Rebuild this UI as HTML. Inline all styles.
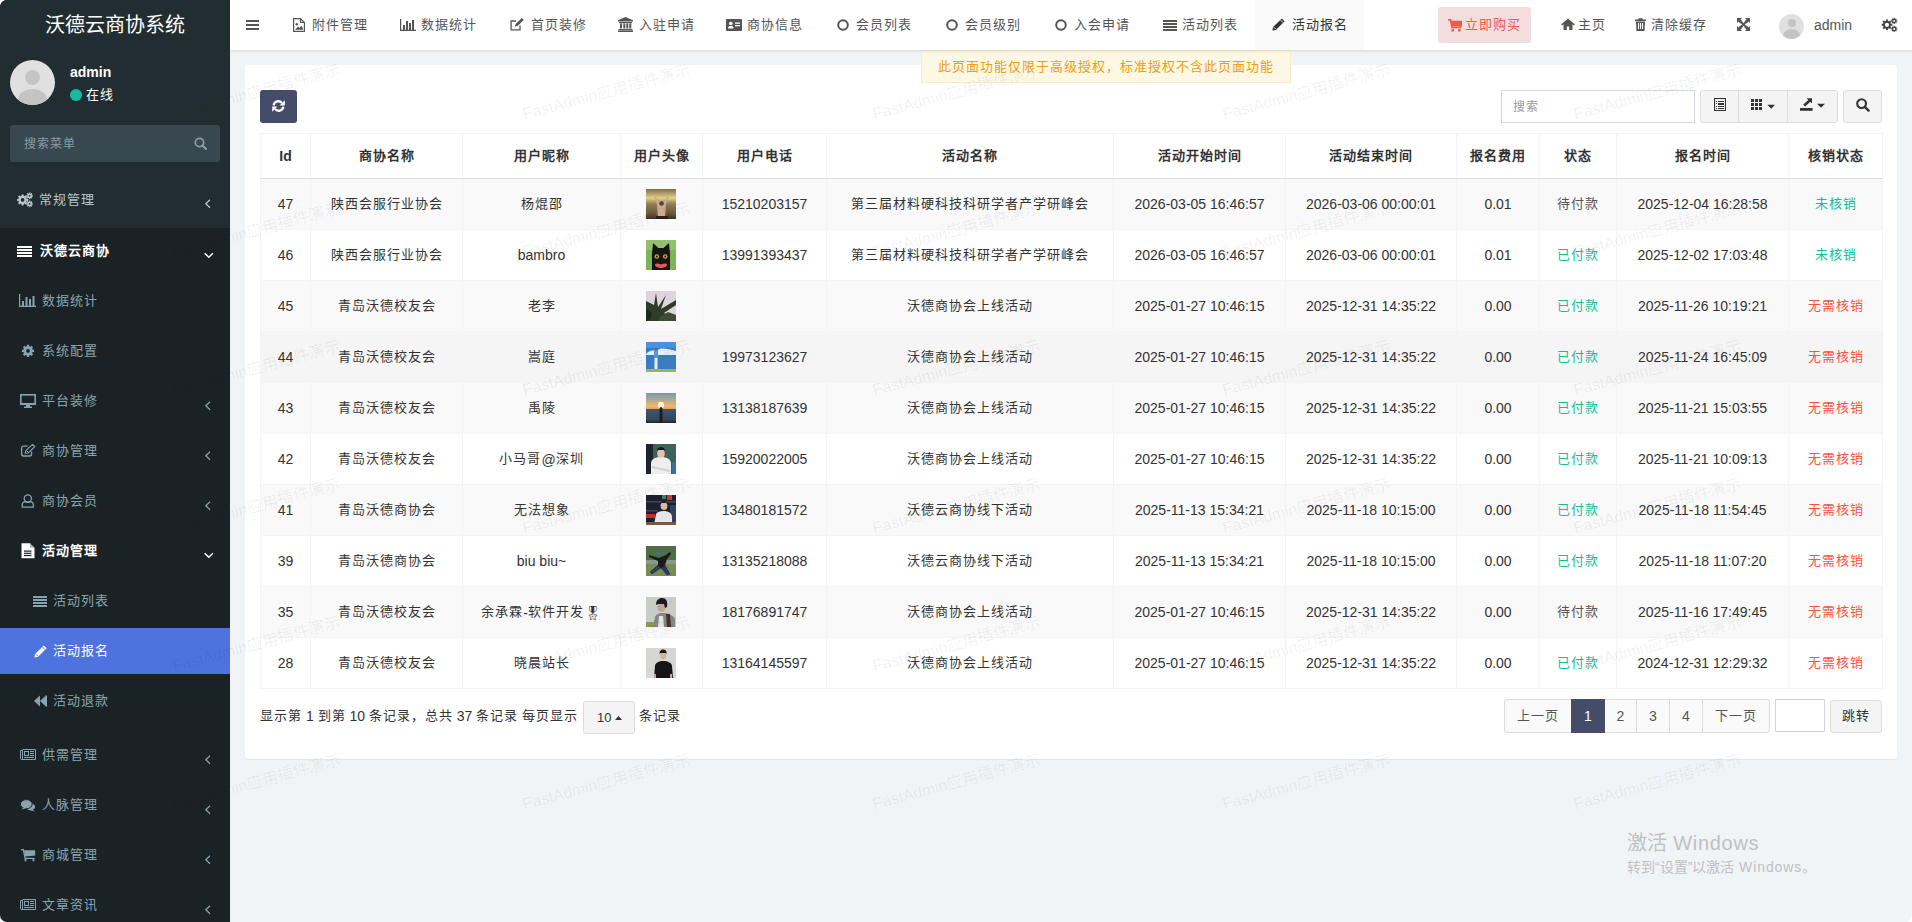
<!DOCTYPE html>
<html lang="zh-CN"><head><meta charset="utf-8"><title>活动报名</title>
<style>
*{box-sizing:border-box}
html,body{margin:0;padding:0;width:1912px;height:922px;overflow:hidden;background:#fff;font-family:"Liberation Sans",sans-serif;font-size:14px;color:#333}
#win{position:absolute;left:0;top:0;width:1912px;height:922px;border-radius:7px;overflow:hidden;background:#f1f4f6}
.abs{position:absolute}
svg{display:block;position:absolute}
.c{font-size:13px;letter-spacing:1px;position:relative;top:-1px}
.tb .c{top:-2px}
.s13 .c{font-size:12px}
.logo .c,.wm .c,.win .c{font-size:inherit;letter-spacing:0;top:0}
/* sidebar */
#side{position:absolute;left:0;top:0;width:230px;height:922px;background:#1a2226}
#side .top{position:absolute;left:0;top:0;width:230px;height:228px;background:#222d32}
.logo{position:absolute;left:0;top:0;width:230px;height:50px;line-height:50px;text-align:center;color:#fff;font-size:20px}
.uav{position:absolute;left:10px;top:60px;width:45px;height:45px;border-radius:50%;background:#e0e0e0;overflow:hidden}
.uav:before{content:"";position:absolute;left:15px;top:10px;width:15px;height:15px;border-radius:50%;background:#c4c4c4}
.uav:after{content:"";position:absolute;left:8px;top:29px;width:29px;height:20px;border-radius:50%;background:#c4c4c4}
.uname{position:absolute;left:70px;top:64px;color:#fff;font-weight:bold;font-size:14px}
.uon{position:absolute;left:86px;top:85px;color:#fff;font-size:14px}
.dot{position:absolute;left:70px;top:89px;width:12px;height:12px;border-radius:50%;background:#18bc9c}
.sbox{position:absolute;left:10px;top:125px;width:210px;height:37px;border-radius:3px;background:#374850}
.sbox > span{position:absolute;left:14px;top:10px;color:#8a9ba3;font-size:13px}
.mi{position:absolute;left:0;width:230px;height:20px;font-size:14px;color:#8aa4af;line-height:20px}
.mi .t{position:absolute;left:42px;top:0}
.mi.sub .t{left:53px}
.mi.open{color:#fff;font-weight:bold}
.mi.gen{color:#b8c7ce}
.mi svg{fill:currentColor}
.ang{position:absolute;left:204px;width:8px;height:10px}
.act{position:absolute;left:0;top:628px;width:230px;height:46px;background:#4e73df}
/* header */
#hdr{position:absolute;left:230px;top:0;width:1682px;height:50px;background:#fff;z-index:5}
#hdr .sh{position:absolute;left:0;top:50px;width:1682px;height:4px;background:linear-gradient(rgba(0,10,20,.09),rgba(0,10,20,.02) 60%,rgba(0,0,0,0))}
.nv{position:absolute;top:15px;height:20px;line-height:20px;color:#555;font-size:14px}
.nv svg{fill:#555}
.navact{position:absolute;left:1025px;top:0;width:109px;height:50px;background:#fafafa}
.buy{position:absolute;left:1208px;top:7px;width:93px;height:36px;background:#f2dede;border-radius:3px}
/* content */
.alert{position:absolute;left:921px;top:50px;width:370px;height:33px;background:#fcf8e3;border:1px solid #faebcc;color:#f39c12;font-size:14px;line-height:32px;text-align:center}
.panel{position:absolute;left:245px;top:65px;width:1652px;height:694px;background:#fff;border-radius:3px;box-shadow:0 1px 1px rgba(0,0,0,.06)}
.btn{position:absolute;border:1px solid #ddd;background:#f4f4f4;border-radius:3px}
.tb{position:absolute;left:260px;top:133px;border-collapse:collapse;table-layout:fixed;width:1622px}
.tb th,.tb td{border:1px solid #f4f4f4;text-align:center;padding:0;font-size:14px;white-space:nowrap;overflow:hidden}
.tb th{height:45px;font-weight:bold;color:#333;border-bottom:1px solid #ddd;background:#fff}
.tb td{height:51px;color:#333}
.tb tr.odd td{background:#f9f9f9}
.tb tr.even td{background:#fff}
.tb tr.hover td{background:#f5f5f5}
.tb svg.av{display:inline-block;position:relative;left:-1px;width:30px;height:30px;vertical-align:middle}
.ok{color:#18bc9c}
.wait{color:#555}
.red{color:#f75444}
.pg{position:absolute;top:699px;height:34px;border:1px solid #ddd;background:#fafafa;color:#555;line-height:32px;text-align:center;font-size:14px}
.wm{position:absolute;color:rgba(40,0,0,.065);font-size:16px;white-space:nowrap;transform:rotate(-15deg);transform-origin:0 0;line-height:16px;pointer-events:none}
</style></head>
<body><div id="win">

<!-- SIDEBAR -->
<div id="side">
 <div class="top"></div>
 <div class="logo"><span class="c">沃德云商协系统</span></div>
 <div class="uav"></div>
 <div class="uname">admin</div>
 <div class="dot"></div>
 <div class="uon"><span class="c">在线</span></div>
 <div class="sbox"><span class="s13"><span class="c">搜索菜单</span></span>
  <svg style="left:184px;top:12px" width="13" height="13" viewBox="0 0 13 13"><circle cx="5.5" cy="5.5" r="4.2" fill="none" stroke="#8a9ba3" stroke-width="1.8"/><path d="M8.5 8.5L12 12" stroke="#8a9ba3" stroke-width="2.2" stroke-linecap="round"/></svg>
 </div>
 <div class="act"></div>

 <div class="mi gen" style="top:190px"><svg style="left:14px;top:-2px" width="24" height="24" viewBox="0 0 24 24"><path fill-rule="evenodd" fill="currentColor" d="M7.56 7.83L7.60 6.39L9.60 6.39L9.64 7.83L10.74 8.28L11.79 7.30L13.20 8.71L12.22 9.76L12.67 10.86L14.11 10.90L14.11 12.90L12.67 12.94L12.22 14.04L13.20 15.09L11.79 16.50L10.74 15.52L9.64 15.97L9.60 17.41L7.60 17.41L7.56 15.97L6.46 15.52L5.41 16.50L4.00 15.09L4.98 14.04L4.53 12.94L3.09 12.90L3.09 10.90L4.53 10.86L4.98 9.76L4.00 8.71L5.41 7.30L6.46 8.28ZM10.50 11.90A1.9 1.9 0 1 0 6.70 11.90A1.9 1.9 0 1 0 10.50 11.90ZM14.98 5.38L14.99 4.45L16.21 4.45L16.22 5.38L16.87 5.65L17.54 5.00L18.40 5.86L17.75 6.53L18.02 7.18L18.95 7.19L18.95 8.41L18.02 8.42L17.75 9.07L18.40 9.74L17.54 10.60L16.87 9.95L16.22 10.22L16.21 11.15L14.99 11.15L14.98 10.22L14.33 9.95L13.66 10.60L12.80 9.74L13.45 9.07L13.18 8.42L12.25 8.41L12.25 7.19L13.18 7.18L13.45 6.53L12.80 5.86L13.66 5.00L14.33 5.65ZM16.50 7.80A0.9 0.9 0 1 0 14.70 7.80A0.9 0.9 0 1 0 16.50 7.80ZM14.98 13.48L14.99 12.55L16.21 12.55L16.22 13.48L16.87 13.75L17.54 13.10L18.40 13.96L17.75 14.63L18.02 15.28L18.95 15.29L18.95 16.51L18.02 16.52L17.75 17.17L18.40 17.84L17.54 18.70L16.87 18.05L16.22 18.32L16.21 19.25L14.99 19.25L14.98 18.32L14.33 18.05L13.66 18.70L12.80 17.84L13.45 17.17L13.18 16.52L12.25 16.51L12.25 15.29L13.18 15.28L13.45 14.63L12.80 13.96L13.66 13.10L14.33 13.75ZM16.50 15.90A0.9 0.9 0 1 0 14.70 15.90A0.9 0.9 0 1 0 16.50 15.90Z"/></svg><span class="t" style="left:39px"><span class="c">常规管理</span></span><svg class="ang" style="top:9px" viewBox="0 0 8 10"><path d="M6 0.8L1.8 4.8L6 8.8" fill="none" stroke="#b8c7ce" stroke-width="1.3"/></svg></div>

 <div class="mi open" style="top:241px"><svg style="left:17px;top:5px" width="15" height="11" viewBox="0 0 15 11"><rect x="0" y="0" width="15" height="2" /><rect x="0" y="3" width="15" height="2"/><rect x="0" y="6" width="15" height="2"/><rect x="0" y="9" width="15" height="2"/></svg><span class="t" style="left:40px"><span class="c">沃德云商协</span></span><svg class="ang" style="top:10px;width:11px;height:8px" viewBox="0 0 11 8"><path d="M0.7 2.2L4.8 6.3L8.9 2.2" fill="none" stroke="#fff" stroke-width="1.5"/></svg></div>

 <div class="mi" style="top:291px"><svg style="left:19px;top:3px" width="17" height="14" viewBox="0 0 17 14"><path d="M0.6 0V12.4H17" fill="none" stroke="currentColor" stroke-width="1.2"/><rect x="3" y="7" width="2" height="5"/><rect x="6.5" y="3" width="2" height="9"/><rect x="10" y="5" width="2" height="7"/><rect x="13.5" y="2" width="2" height="10"/></svg><span class="t"><span class="c">数据统计</span></span></div>

 <div class="mi" style="top:341px"><svg style="left:16px;top:-3px" width="24" height="24" viewBox="0 0 24 24"><path fill-rule="evenodd" fill="currentColor" d="M10.81 8.25L10.89 6.80L13.11 6.80L13.19 8.25L14.44 8.77L15.53 7.80L17.10 9.37L16.13 10.46L16.65 11.71L18.10 11.79L18.10 14.01L16.65 14.09L16.13 15.34L17.10 16.43L15.53 18.00L14.44 17.03L13.19 17.55L13.11 19.00L10.89 19.00L10.81 17.55L9.56 17.03L8.47 18.00L6.90 16.43L7.87 15.34L7.35 14.09L5.90 14.01L5.90 11.79L7.35 11.71L7.87 10.46L6.90 9.37L8.47 7.80L9.56 8.77ZM13.90 12.90A1.9 1.9 0 1 0 10.10 12.90A1.9 1.9 0 1 0 13.90 12.90Z"/></svg><span class="t"><span class="c">系统配置</span></span></div>

 <div class="mi" style="top:391px"><svg style="left:20px;top:3px" width="16" height="14" viewBox="0 0 16 14"><rect x="0.8" y="0.8" width="14.4" height="9.4" fill="none" stroke="currentColor" stroke-width="1.6"/><rect x="0" y="9" width="16" height="2"/><rect x="6" y="11" width="4" height="2"/><rect x="4" y="12.5" width="8" height="1.5"/></svg><span class="t"><span class="c">平台装修</span></span><svg class="ang" style="top:10px" viewBox="0 0 8 10"><path d="M6 0.8L1.8 4.8L6 8.8" fill="none" stroke="currentColor" stroke-width="1.25"/></svg></div>

 <div class="mi" style="top:441px"><svg style="left:20px;top:3px" width="16" height="14" viewBox="0 0 16 14"><path d="M7.5 2.1H3.6Q1.6 2.1 1.6 4.1V10Q1.6 12 3.6 12H9.6Q11.6 12 11.6 10V7.5" fill="none" stroke="currentColor" stroke-width="1.3"/><path d="M5.2 9.3L5.8 6.7L12.6 0.4L14.9 2.6L8.1 9Z" fill="none" stroke="currentColor" stroke-width="1.1" stroke-linejoin="round"/><path d="M6.5 6.5L8.5 8.5" stroke="currentColor" stroke-width="1"/></svg><span class="t"><span class="c">商协管理</span></span><svg class="ang" style="top:10px" viewBox="0 0 8 10"><path d="M6 0.8L1.8 4.8L6 8.8" fill="none" stroke="currentColor" stroke-width="1.25"/></svg></div>

 <div class="mi" style="top:491px"><svg style="left:20px;top:2px" width="16" height="16" viewBox="0 0 16 16"><circle cx="7.8" cy="5.5" r="3.6" fill="none" stroke="currentColor" stroke-width="1.25"/><path d="M2.2 14.2V12.5C2.2 10 4 8.7 5.6 8.7C6.8 9.3 8.8 9.3 10 8.7C11.6 8.7 13.4 10 13.4 12.5V14.2Z" fill="none" stroke="currentColor" stroke-width="1.25" stroke-linejoin="round"/></svg><span class="t"><span class="c">商协会员</span></span><svg class="ang" style="top:10px" viewBox="0 0 8 10"><path d="M6 0.8L1.8 4.8L6 8.8" fill="none" stroke="currentColor" stroke-width="1.25"/></svg></div>

 <div class="mi open" style="top:541px"><svg style="left:21px;top:2px" width="14" height="16" viewBox="0 0 14 16"><path d="M0.5 0.3H9L13.5 4.8V15.3H0.5Z" fill="#fff"/><path d="M9 0.3V4.8H13.5Z" fill="#1a2226" opacity=".35"/><rect x="3" y="7.5" width="7.5" height="1.2" fill="#1a2226"/><rect x="3" y="9.7" width="7.5" height="1.2" fill="#1a2226"/><rect x="3" y="11.9" width="7.5" height="1.2" fill="#1a2226"/></svg><span class="t"><span class="c">活动管理</span></span><svg class="ang" style="top:10px;width:11px;height:8px" viewBox="0 0 11 8"><path d="M0.7 2.2L4.8 6.3L8.9 2.2" fill="none" stroke="#fff" stroke-width="1.5"/></svg></div>

 <div class="mi sub" style="top:591px"><svg style="left:33px;top:5px" width="14" height="11" viewBox="0 0 14 11"><rect x="0" y="0" width="14" height="2"/><rect x="0" y="3" width="14" height="2"/><rect x="0" y="6" width="14" height="2"/><rect x="0" y="9" width="14" height="2"/></svg><span class="t"><span class="c">活动列表</span></span></div>

 <div class="mi sub" style="top:641px;color:#fff"><svg style="left:34px;top:4px" width="14" height="13" viewBox="0 0 14 13"><path d="M0.4 12.6L1.1 9.1L9.8 0.5L12.6 3.3L3.9 11.9Z" fill="#fff"/><path d="M8.4 1.9L11.2 4.7" stroke="#4e73df" stroke-width="0.9"/><path d="M1.9 9.2L3.8 11.1" stroke="#4e73df" stroke-width="0.9"/><path d="M0.9 12.1L1.3 10.4L2.6 11.7Z" fill="#fff"/></svg><span class="t"><span class="c">活动报名</span></span></div>

 <div class="mi sub" style="top:691px"><svg style="left:34px;top:4px" width="13" height="12" viewBox="0 0 13 12"><path d="M0 6L6 0.5V11.5Z"/><path d="M6 6L12 0.5V11.5Z"/><rect x="11.5" y="0.5" width="1.5" height="11"/></svg><span class="t"><span class="c">活动退款</span></span></div>

 <div class="mi" style="top:745px"><svg style="left:20px;top:4px" width="17" height="12" viewBox="0 0 17 12"><path d="M2.5 0.5H15.5V10.5H1.5Q0.5 10.5 0.5 9.5V1.5H2.5V10.5" fill="none" stroke="currentColor" stroke-width="1"/><rect x="4.5" y="2.5" width="4" height="4" fill="none" stroke="currentColor" stroke-width="1"/><rect x="10" y="2" width="4" height="1"/><rect x="10" y="4" width="4" height="1"/><rect x="10" y="6" width="4" height="1"/><rect x="4" y="8" width="10" height="1"/></svg><span class="t"><span class="c">供需管理</span></span><svg class="ang" style="top:10px" viewBox="0 0 8 10"><path d="M6 0.8L1.8 4.8L6 8.8" fill="none" stroke="currentColor" stroke-width="1.25"/></svg></div>

 <div class="mi" style="top:795px"><svg style="left:20px;top:3px" width="16" height="15" viewBox="0 0 16 15"><ellipse cx="10.5" cy="8.8" rx="4.6" ry="3.6"/><path d="M12.5 11.5L15 13.6L10.5 12.3Z"/><ellipse cx="6.3" cy="6.2" rx="5.9" ry="4.6" stroke="#1a2226" stroke-width="1"/><path d="M3.2 9.8L1.6 11.6L6 10.6Z"/></svg><span class="t"><span class="c">人脉管理</span></span><svg class="ang" style="top:10px" viewBox="0 0 8 10"><path d="M6 0.8L1.8 4.8L6 8.8" fill="none" stroke="currentColor" stroke-width="1.25"/></svg></div>

 <div class="mi" style="top:845px"><svg style="left:21px;top:4px" width="15" height="13" viewBox="0 0 15 13"><path d="M0 0.6H2.3L4.2 9.3H13.5" fill="none" stroke="currentColor" stroke-width="1.3"/><path d="M3 1.2H14.2V6.4L4.2 7.5Z"/><rect x="3.6" y="9.5" width="1.8" height="2.8"/><rect x="11.6" y="9.5" width="1.8" height="2.8"/></svg><span class="t"><span class="c">商城管理</span></span><svg class="ang" style="top:10px" viewBox="0 0 8 10"><path d="M6 0.8L1.8 4.8L6 8.8" fill="none" stroke="currentColor" stroke-width="1.25"/></svg></div>

 <div class="mi" style="top:895px"><svg style="left:20px;top:4px" width="17" height="12" viewBox="0 0 17 12"><path d="M2.5 0.5H15.5V10.5H1.5Q0.5 10.5 0.5 9.5V1.5H2.5V10.5" fill="none" stroke="currentColor" stroke-width="1"/><rect x="4.5" y="2.5" width="4" height="4" fill="none" stroke="currentColor" stroke-width="1"/><rect x="10" y="2" width="4" height="1"/><rect x="10" y="4" width="4" height="1"/><rect x="10" y="6" width="4" height="1"/><rect x="4" y="8" width="10" height="1"/></svg><span class="t"><span class="c">文章资讯</span></span><svg class="ang" style="top:10px" viewBox="0 0 8 10"><path d="M6 0.8L1.8 4.8L6 8.8" fill="none" stroke="currentColor" stroke-width="1.25"/></svg></div>
</div>

<!-- HEADER -->
<div id="hdr">
 <div class="navact"></div>
 <svg style="left:16px;top:20px" width="13" height="10" viewBox="0 0 13 10"><rect y="0" width="13" height="2" fill="#555"/><rect y="4" width="13" height="2" fill="#555"/><rect y="8" width="13" height="2" fill="#555"/></svg>

 <div class="nv" style="left:62px"><svg style="left:1px;top:3px" width="12" height="14" viewBox="0 0 12 14"><path d="M0.6 0.6H7.5L11.4 4.5V13.4H0.6Z" fill="none" stroke="#555" stroke-width="1.2"/><path d="M7.5 0.6V4.5H11.4" fill="none" stroke="#555" stroke-width="1.2"/><circle cx="3.8" cy="6.3" r="1.2" fill="#555"/><path d="M2 11.8L5 8.5L6.5 10L8.3 7.8L10 10.5V11.8Z" fill="#555"/></svg><span style="position:absolute;left:20px;width:60px"><span class="c">附件管理</span></span></div>
 <div class="nv" style="left:170px"><svg style="left:0;top:4px" width="16" height="12" viewBox="0 0 16 12"><path d="M0.6 0V11.4H16" fill="none" stroke="#555" stroke-width="1.2"/><rect x="3" y="6" width="2" height="5"/><rect x="6" y="2" width="2" height="9"/><rect x="9" y="4" width="2" height="7"/><rect x="12" y="1" width="2" height="10"/></svg><span style="position:absolute;left:21px;width:60px"><span class="c">数据统计</span></span></div>
 <div class="nv" style="left:280px"><svg style="left:0;top:3px" width="14" height="13" viewBox="0 0 14 13"><path d="M10 7.5V11.9H1.1V3H6" fill="none" stroke="#555" stroke-width="1.3"/><path d="M5 8.5L5.6 6L11.8 0L13.8 2L7.5 8Z" fill="#555"/></svg><span style="position:absolute;left:21px;width:60px"><span class="c">首页装修</span></span></div>
 <div class="nv" style="left:388px"><svg style="left:0;top:2px" width="15" height="15" viewBox="0 0 15 15"><path d="M7.5 0L15 3.2V4.5H0V3.2Z"/><rect x="1" y="5" width="13" height="1.2"/><rect x="2" y="6.5" width="2" height="5"/><rect x="5.3" y="6.5" width="2" height="5"/><rect x="8.3" y="6.5" width="2" height="5"/><rect x="11.3" y="6.5" width="2" height="5"/><rect x="0.5" y="12" width="14" height="1.3"/><rect x="0" y="13.5" width="15" height="1.5"/></svg><span style="position:absolute;left:21px;width:60px"><span class="c">入驻申请</span></span></div>
 <div class="nv" style="left:496px"><svg style="left:0;top:4px" width="16" height="12" viewBox="0 0 16 12"><rect x="0" y="0" width="16" height="12" rx="1"/><circle cx="4.8" cy="4.5" r="1.8" fill="#fff"/><path d="M2 9.5C2 7.5 3 7 4.8 7C6.6 7 7.6 7.5 7.6 9.5Z" fill="#fff"/><rect x="9" y="3.5" width="5" height="1.3" fill="#fff"/><rect x="9" y="6" width="5" height="1.3" fill="#fff"/></svg><span style="position:absolute;left:21px;width:60px"><span class="c">商协信息</span></span></div>
 <div class="nv" style="left:607px"><svg style="left:0;top:4px" width="12" height="12" viewBox="0 0 12 12"><circle cx="6" cy="6" r="4.8" fill="none" stroke="#555" stroke-width="2"/></svg><span style="position:absolute;left:19px;width:60px"><span class="c">会员列表</span></span></div>
 <div class="nv" style="left:716px"><svg style="left:0;top:4px" width="12" height="12" viewBox="0 0 12 12"><circle cx="6" cy="6" r="4.8" fill="none" stroke="#555" stroke-width="2"/></svg><span style="position:absolute;left:19px;width:60px"><span class="c">会员级别</span></span></div>
 <div class="nv" style="left:825px"><svg style="left:0;top:4px" width="12" height="12" viewBox="0 0 12 12"><circle cx="6" cy="6" r="4.8" fill="none" stroke="#555" stroke-width="2"/></svg><span style="position:absolute;left:19px;width:60px"><span class="c">入会申请</span></span></div>
 <div class="nv" style="left:933px"><svg style="left:0;top:5px" width="14" height="11" viewBox="0 0 14 11"><rect y="0" width="14" height="2"/><rect y="3" width="14" height="2"/><rect y="6" width="14" height="2"/><rect y="9" width="14" height="2"/></svg><span style="position:absolute;left:19px;width:60px"><span class="c">活动列表</span></span></div>
 <div class="nv" style="left:1042px;color:#333"><svg style="left:0;top:3px" width="14" height="13" viewBox="0 0 14 13"><path d="M0.4 12.6L1.1 9.1L9.8 0.5L12.6 3.3L3.9 11.9Z" fill="#333"/><path d="M8.4 1.9L11.2 4.7" stroke="#fafafa" stroke-width="0.9"/><path d="M1.9 9.2L3.8 11.1" stroke="#fafafa" stroke-width="0.9"/><path d="M0.9 12.1L1.3 10.4L2.6 11.7Z" fill="#333"/></svg><span style="position:absolute;left:20px;width:60px"><span class="c">活动报名</span></span></div>

 <div class="buy"></div>
 <div class="nv" style="left:1218px;color:#f5574a"><svg style="left:0;top:4px" width="14" height="13" viewBox="0 0 14 13"><path d="M0 0.8H2.5L4 8.5H12.5L14 2.5H3" fill="none" stroke="#f5574a" stroke-width="1.6"/><path d="M3 2.5H14L12.8 7.5H4Z" fill="#f5574a"/><rect x="3.5" y="10" width="2.5" height="2.5" fill="#f5574a"/><rect x="10" y="10" width="2.5" height="2.5" fill="#f5574a"/></svg><span style="position:absolute;left:17px;width:60px"><span class="c">立即购买</span></span></div>
 <div class="nv" style="left:1331px"><svg style="left:0;top:3px" width="14" height="12" viewBox="0 0 14 12"><path d="M7 0.5L0 6.5L1 7.5L2.5 6.3V12H5.8V8.5H8.2V12H11.5V6.3L13 7.5L14 6.5Z"/></svg><span style="position:absolute;left:17px;width:60px"><span class="c">主页</span></span></div>
 <div class="nv" style="left:1405px"><svg style="left:0;top:3px" width="11" height="13" viewBox="0 0 11 13"><path d="M3.5 0.3H7.5L8 1.5H11V3H0V1.5H3Z" fill="#555"/><path d="M1 3.5H10L9.5 13H1.5Z" fill="#555"/><rect x="3" y="5" width="1.1" height="6" fill="#fff"/><rect x="5" y="5" width="1.1" height="6" fill="#fff"/><rect x="7" y="5" width="1.1" height="6" fill="#fff"/></svg><span style="position:absolute;left:16px;width:60px"><span class="c">清除缓存</span></span></div>
 <svg style="left:1507px;top:18px" width="13" height="13" viewBox="0 0 13 13"><path d="M0 0H5L3.5 1.5L5.5 3.5L3.5 5.5L1.5 3.5L0 5Z M13 0V5L11.5 3.5L9.5 5.5L7.5 3.5L9.5 1.5L8 0Z M0 13V8L1.5 9.5L3.5 7.5L5.5 9.5L3.5 11.5L5 13Z M13 13H8L9.5 11.5L7.5 9.5L9.5 7.5L11.5 9.5L13 8Z" fill="#555"/><path d="M3 3L10 10M10 3L3 10" stroke="#555" stroke-width="1.8"/></svg>
 <div class="abs" style="left:1549px;top:14px;width:25px;height:25px;border-radius:50%;background:#e0e0e0;overflow:hidden"><div class="abs" style="left:8.5px;top:5px;width:8px;height:8px;border-radius:50%;background:#c4c4c4"></div><div class="abs" style="left:4px;top:15px;width:17px;height:13px;border-radius:50%;background:#c4c4c4"></div></div>
 <div class="nv" style="left:1584px;color:#555">admin</div>
 <svg style="left:1644px;top:12px" width="30" height="26" viewBox="0 0 30 26"><path fill-rule="evenodd" fill="#444" d="M11.97 8.93L11.99 7.49L13.93 7.49L13.95 8.93L15.00 9.36L16.03 8.36L17.40 9.73L16.40 10.76L16.83 11.81L18.27 11.83L18.27 13.77L16.83 13.79L16.40 14.84L17.40 15.87L16.03 17.24L15.00 16.24L13.95 16.67L13.93 18.11L11.99 18.11L11.97 16.67L10.92 16.24L9.89 17.24L8.52 15.87L9.52 14.84L9.09 13.79L7.65 13.77L7.65 11.83L9.09 11.81L9.52 10.76L8.52 9.73L9.89 8.36L10.92 9.36ZM15.06 12.80A2.1 2.1 0 1 0 10.86 12.80A2.1 2.1 0 1 0 15.06 12.80ZM19.61 6.78L19.57 5.76L20.83 5.76L20.79 6.78L21.28 6.98L21.97 6.23L22.87 7.13L22.12 7.82L22.32 8.31L23.34 8.27L23.34 9.53L22.32 9.49L22.12 9.98L22.87 10.67L21.97 11.57L21.28 10.82L20.79 11.02L20.83 12.04L19.57 12.04L19.61 11.02L19.12 10.82L18.43 11.57L17.53 10.67L18.28 9.98L18.08 9.49L17.06 9.53L17.06 8.27L18.08 8.31L18.28 7.82L17.53 7.13L18.43 6.23L19.12 6.98ZM21.20 8.90A1.0 1.0 0 1 0 19.20 8.90A1.0 1.0 0 1 0 21.20 8.90ZM19.61 14.78L19.57 13.76L20.83 13.76L20.79 14.78L21.28 14.98L21.97 14.23L22.87 15.13L22.12 15.82L22.32 16.31L23.34 16.27L23.34 17.53L22.32 17.49L22.12 17.98L22.87 18.67L21.97 19.57L21.28 18.82L20.79 19.02L20.83 20.04L19.57 20.04L19.61 19.02L19.12 18.82L18.43 19.57L17.53 18.67L18.28 17.98L18.08 17.49L17.06 17.53L17.06 16.27L18.08 16.31L18.28 15.82L17.53 15.13L18.43 14.23L19.12 14.98ZM21.20 16.90A1.0 1.0 0 1 0 19.20 16.90A1.0 1.0 0 1 0 21.20 16.90Z"/></svg>
 <div class="sh"></div>
</div>

<!-- CONTENT -->
<div class="panel"></div>
<div class="alert"><span class="c">此页面功能仅限于高级授权，标准授权不含此页面功能</span></div>

<div class="abs" style="left:260px;top:90px;width:37px;height:33px;background:#444c69;border-radius:3px"><svg style="left:12px;top:9.5px" width="13" height="12" viewBox="0 0 13 12"><path d="M1.7 5.4A4.6 4.6 0 0 1 10 3.2" fill="none" stroke="#fff" stroke-width="2.3"/><path d="M12.8 0.3V5.4H7.6Z" fill="#fff"/><path d="M11.3 6.6A4.6 4.6 0 0 1 3 8.8" fill="none" stroke="#fff" stroke-width="2.3"/><path d="M0.2 11.7V6.6H5.4Z" fill="#fff"/></svg></div>

<div class="abs" style="left:1501px;top:90px;width:194px;height:33px;border:1px solid #d2d6de;background:#fff"><span class="abs s13" style="left:11px;top:7px;color:#999;font-size:13px"><span class="c">搜索</span></span></div>
<div class="btn" style="left:1700px;top:90px;width:138px;height:33px"></div>
<div class="abs" style="left:1738px;top:91px;width:1px;height:31px;background:#ddd"></div>
<div class="abs" style="left:1787px;top:91px;width:1px;height:31px;background:#ddd"></div>
<svg style="left:1714px;top:98px" width="12" height="13" viewBox="0 0 12 13"><rect x="0.5" y="0.5" width="11" height="12" fill="none" stroke="#333" stroke-width="1.1"/><g fill="#333"><rect x="2" y="3" width="1" height="1"/><rect x="4" y="3" width="6" height="1"/><rect x="2" y="5" width="1" height="1"/><rect x="4" y="5" width="6" height="2"/><rect x="2" y="8" width="1" height="1"/><rect x="4" y="8" width="6" height="1"/><rect x="2" y="10" width="1" height="1"/><rect x="4" y="10" width="6" height="1"/></g></svg>
<svg style="left:1751px;top:99px" width="26" height="12" viewBox="0 0 26 12"><g fill="#333"><rect x="0" y="0" width="3" height="3"/><rect x="0" y="4" width="3" height="3"/><rect x="0" y="8" width="3" height="3"/><rect x="4" y="0" width="3" height="3"/><rect x="4" y="4" width="3" height="3"/><rect x="4" y="8" width="3" height="3"/><rect x="8" y="0" width="3" height="3"/><rect x="8" y="4" width="3" height="3"/><rect x="8" y="8" width="3" height="3"/><path d="M16.4 5.8H24L20.2 9.7Z"/></g></svg>
<svg style="left:1800px;top:98px" width="26" height="13" viewBox="0 0 26 13"><g fill="#333"><rect x="0" y="10" width="12.6" height="2.8"/><path d="M3.2 6.6L8.4 1.9L6.6 0.2H12V5.6L10.3 3.8L5.1 8.5Z"/><path d="M17 5.8H25L21 9.7Z"/></g></svg>
<div class="btn" style="left:1843px;top:90px;width:39px;height:33px"><svg style="left:12px;top:7px" width="14" height="14" viewBox="0 0 14 14"><circle cx="5.6" cy="5.6" r="4.4" fill="none" stroke="#333" stroke-width="2.1"/><path d="M8.8 8.8L12.6 12.6" stroke="#333" stroke-width="2.4" stroke-linecap="round"/></svg></div>

<table class="tb"><colgroup><col style="width:50px"><col style="width:152px"><col style="width:158px"><col style="width:82px"><col style="width:124px"><col style="width:287px"><col style="width:172px"><col style="width:171px"><col style="width:83px"><col style="width:77px"><col style="width:172px"><col style="width:94px"></colgroup><thead><tr><th>Id</th><th><span class="c">商协名称</span></th><th><span class="c">用户昵称</span></th><th><span class="c">用户头像</span></th><th><span class="c">用户电话</span></th><th><span class="c">活动名称</span></th><th><span class="c">活动开始时间</span></th><th><span class="c">活动结束时间</span></th><th><span class="c">报名费用</span></th><th><span class="c">状态</span></th><th><span class="c">报名时间</span></th><th><span class="c">核销状态</span></th></tr></thead><tbody><tr class="odd"><td>47</td><td><span class="c">陕西会服行业协会</span></td><td><span class="c">杨焜邵</span></td><td><svg class="av" viewBox="0 0 30 30" width="30" height="30"><defs><linearGradient id="g10" x1="0" y1="0" x2="0" y2="1"><stop offset="0" stop-color="#7d6c48"/><stop offset=".3" stop-color="#e6cf8e"/><stop offset=".5" stop-color="#8f7d55"/><stop offset=".8" stop-color="#6d5c3e"/><stop offset="1" stop-color="#3b3022"/></linearGradient></defs><rect width="30" height="30" fill="url(#g10)"/><path d="M8 8L11 15L12 30H19L20 15L23 8L21.5 8L18 13H13L9.5 8Z" fill="#c9aa92"/><circle cx="15.5" cy="14.5" r="2.3" fill="#5a4030"/><rect x="10" y="27" width="12" height="3" fill="#2a2018"/></svg></td><td>15210203157</td><td><span class="c">第三届材料硬科技科研学者产学研峰会</span></td><td>2026-03-05 16:46:57</td><td>2026-03-06 00:00:01</td><td>0.01</td><td><span class="wait"><span class="c">待付款</span></span></td><td>2025-12-04 16:28:58</td><td><span class="ok"><span class="c">未核销</span></span></td></tr><tr class="even"><td>46</td><td><span class="c">陕西会服行业协会</span></td><td>bambro</td><td><svg class="av" viewBox="0 0 30 30" width="30" height="30"><rect width="30" height="30" fill="#7fb356"/><rect y="0" width="30" height="10" fill="#93c06a"/><path d="M6 30V14L7 3L12.5 8H17.5L23 3L24 14V30Z" fill="#161616"/><circle cx="10.8" cy="16.5" r="2.3" fill="#d8a82a"/><circle cx="19.2" cy="16.5" r="2.3" fill="#d8a82a"/><circle cx="10.8" cy="16.5" r="1" fill="#111"/><circle cx="19.2" cy="16.5" r="1" fill="#111"/><path d="M9 25C9 23 12 23 15 24.5C18 23 21 23 21 25C21 27 17 28 15 28C13 28 9 27 9 25Z" fill="#e65a5a"/></svg></td><td>13991393437</td><td><span class="c">第三届材料硬科技科研学者产学研峰会</span></td><td>2026-03-05 16:46:57</td><td>2026-03-06 00:00:01</td><td>0.01</td><td><span class="ok"><span class="c">已付款</span></span></td><td>2025-12-02 17:03:48</td><td><span class="ok"><span class="c">未核销</span></span></td></tr><tr class="odd"><td>45</td><td><span class="c">青岛沃德校友会</span></td><td><span class="c">老李</span></td><td><svg class="av" viewBox="0 0 30 30" width="30" height="30"><rect width="30" height="30" fill="#ddd5db"/><path d="M0 10L8 14L10 2L12 16L20 4L15 18L30 9L30 14L18 22L30 27V30H0Z" fill="#2f3d28"/><path d="M0 18L6 22L4 28L0 30Z" fill="#1e2818"/><path d="M14 26L22 21L30 24V30H12Z" fill="#3e4e34"/></svg></td><td></td><td><span class="c">沃德商协会上线活动</span></td><td>2025-01-27 10:46:15</td><td>2025-12-31 14:35:22</td><td>0.00</td><td><span class="ok"><span class="c">已付款</span></span></td><td>2025-11-26 10:19:21</td><td><span class="red"><span class="c">无需核销</span></span></td></tr><tr class="hover"><td>44</td><td><span class="c">青岛沃德校友会</span></td><td><span class="c">嵩庭</span></td><td><svg class="av" viewBox="0 0 30 30" width="30" height="30"><rect width="30" height="30" fill="#3b7cc4"/><rect width="30" height="6" fill="#4a92e0"/><path d="M0 12C4 7 8 9 12 8C16 5 22 7 30 9V13H0Z" fill="#e6eef7"/><rect y="27" width="30" height="3" fill="#98b45c"/><rect x="8" y="7" width="4" height="9" fill="#5b9ad8"/><rect x="8.5" y="16" width="3" height="11" fill="#e8eef4"/><circle cx="10" cy="7" r="1.5" fill="#506890"/></svg></td><td>19973123627</td><td><span class="c">沃德商协会上线活动</span></td><td>2025-01-27 10:46:15</td><td>2025-12-31 14:35:22</td><td>0.00</td><td><span class="ok"><span class="c">已付款</span></span></td><td>2025-11-24 16:45:09</td><td><span class="red"><span class="c">无需核销</span></span></td></tr><tr class="odd"><td>43</td><td><span class="c">青岛沃德校友会</span></td><td><span class="c">禹陵</span></td><td><svg class="av" viewBox="0 0 30 30" width="30" height="30"><defs><linearGradient id="g54" x1="0" y1="0" x2="0" y2="1"><stop offset="0" stop-color="#7a98b4"/><stop offset=".45" stop-color="#eab86e"/><stop offset=".52" stop-color="#f0a050"/><stop offset=".55" stop-color="#3e5670"/><stop offset=".88" stop-color="#344860"/><stop offset="1" stop-color="#2c2418"/></linearGradient></defs><rect width="30" height="30" fill="url(#g54)"/><circle cx="15" cy="12" r="3.2" fill="#fff4d0"/><path d="M13.5 30V17C13.5 15 14 14 15 14C16 14 16.5 15 16.5 17V30Z" fill="#1e1e1c"/></svg></td><td>13138187639</td><td><span class="c">沃德商协会上线活动</span></td><td>2025-01-27 10:46:15</td><td>2025-12-31 14:35:22</td><td>0.00</td><td><span class="ok"><span class="c">已付款</span></span></td><td>2025-11-21 15:03:55</td><td><span class="red"><span class="c">无需核销</span></span></td></tr><tr class="even"><td>42</td><td><span class="c">青岛沃德校友会</span></td><td><span class="c">小马哥</span>@<span class="c">深圳</span></td><td><svg class="av" viewBox="0 0 30 30" width="30" height="30"><rect width="30" height="30" fill="#40605a"/><rect width="7" height="30" fill="#1c2430"/><rect x="26" y="18" width="4" height="12" fill="#3a70a0"/><path d="M5 30V20C5 15 9 13 15 13C21 13 25 15 25 20V30Z" fill="#eeeeee"/><path d="M6 22L24 26V28L6 24Z" fill="#d8d0c8"/><ellipse cx="15" cy="9.5" rx="3.8" ry="4.3" fill="#e2c2a8"/><path d="M11 7C11 4 13 3 15 3C17 3 19 4 19 7L18 6H12Z" fill="#181818"/></svg></td><td>15920022005</td><td><span class="c">沃德商协会上线活动</span></td><td>2025-01-27 10:46:15</td><td>2025-12-31 14:35:22</td><td>0.00</td><td><span class="ok"><span class="c">已付款</span></span></td><td>2025-11-21 10:09:13</td><td><span class="red"><span class="c">无需核销</span></span></td></tr><tr class="odd"><td>41</td><td><span class="c">青岛沃德商协会</span></td><td><span class="c">无法想象</span></td><td><svg class="av" viewBox="0 0 30 30" width="30" height="30"><rect width="30" height="30" fill="#1c2030"/><rect y="6" width="30" height="1.5" fill="#404858"/><rect y="15" width="12" height="1.5" fill="#404858"/><rect x="0" y="19" width="9" height="4" fill="#c83030"/><rect x="21" y="0" width="5" height="5" fill="#c83838"/><rect x="16" y="0" width="4" height="4" fill="#3a8a50"/><rect x="24" y="10" width="6" height="20" fill="#34405a"/><path d="M8 30L10 19C11 17 14 16 17.5 16C22 16 26 18 26 22V30Z" fill="#e6e6ea"/><ellipse cx="18" cy="11" rx="3.4" ry="4" fill="#d8b8a0"/><path d="M14.5 9C14.5 6.5 16 6 18 6C20 6 21.5 6.5 21.5 9L20.5 8H15.5Z" fill="#222"/><rect y="27" width="30" height="3" fill="#7a5840"/></svg></td><td>13480181572</td><td><span class="c">沃德云商协线下活动</span></td><td>2025-11-13 15:34:21</td><td>2025-11-18 10:15:00</td><td>0.00</td><td><span class="ok"><span class="c">已付款</span></span></td><td>2025-11-18 11:54:45</td><td><span class="red"><span class="c">无需核销</span></span></td></tr><tr class="even"><td>39</td><td><span class="c">青岛沃德商协会</span></td><td>biu biu~</td><td><svg class="av" viewBox="0 0 30 30" width="30" height="30"><rect width="30" height="30" fill="#4f6e46"/><rect y="17" width="30" height="13" fill="#768c52"/><rect y="14" width="30" height="4" fill="#8a9888"/><path d="M3 9L13 12L20 9L24 6L25 8L21 13L19 19L24 28L21 29L15 22L6 28L4 26L12 19L12 15L3 11Z" fill="#1a1a1e"/><path d="M15 22L6 28L4 26L12 20Z" fill="#2a3a6a"/><path d="M19 20L24 28L21 29L15 22Z" fill="#2a3a6a"/><circle cx="12.5" cy="7" r="2" fill="#3a70a8"/></svg></td><td>13135218088</td><td><span class="c">沃德云商协线下活动</span></td><td>2025-11-13 15:34:21</td><td>2025-11-18 10:15:00</td><td>0.00</td><td><span class="ok"><span class="c">已付款</span></span></td><td>2025-11-18 11:07:20</td><td><span class="red"><span class="c">无需核销</span></span></td></tr><tr class="odd"><td>35</td><td><span class="c">青岛沃德校友会</span></td><td><span class="c">余承霖</span>-<span class="c">软件开发</span>🎖</td><td><svg class="av" viewBox="0 0 30 30" width="30" height="30"><rect width="30" height="30" fill="#c9cbc7"/><rect y="25" width="8" height="5" fill="#8a9a48"/><path d="M7 30L9 20C10 17 13 16 16 16C21 16 26 17 29 22V30Z" fill="#7f8788"/><path d="M12 30L13 19H17L18 30Z" fill="#e4e4e4"/><path d="M20 17L24 17L25 30H21Z" fill="#4a3028"/><ellipse cx="15.5" cy="10" rx="4.2" ry="5" fill="#c0a898"/><path d="M10 8C10 3 13 1 16 1C20 1 22 4 21 10L19 11L18 7H12Z" fill="#1c1c20"/></svg></td><td>18176891747</td><td><span class="c">沃德商协会上线活动</span></td><td>2025-01-27 10:46:15</td><td>2025-12-31 14:35:22</td><td>0.00</td><td><span class="wait"><span class="c">待付款</span></span></td><td>2025-11-16 17:49:45</td><td><span class="red"><span class="c">无需核销</span></span></td></tr><tr class="even"><td>28</td><td><span class="c">青岛沃德校友会</span></td><td><span class="c">晓晨站长</span></td><td><svg class="av" viewBox="0 0 30 30" width="30" height="30"><rect width="30" height="30" fill="#d6d6d4"/><path d="M8 30L9 18C9 15 13 13 17 13C22 13 26 15 26 18L27 30Z" fill="#151515"/><ellipse cx="17" cy="7.5" rx="3.2" ry="3.8" fill="#d2b496"/><path d="M13.5 6C13.5 2.5 15.5 1.5 17 1.5C19 1.5 21 2.5 20.5 6L19.5 5H14.5Z" fill="#1a1a1a"/><rect x="8" y="26" width="2" height="4" fill="#c8a890"/><rect x="24" y="26" width="2" height="4" fill="#c8a890"/></svg></td><td>13164145597</td><td><span class="c">沃德商协会上线活动</span></td><td>2025-01-27 10:46:15</td><td>2025-12-31 14:35:22</td><td>0.00</td><td><span class="ok"><span class="c">已付款</span></span></td><td>2024-12-31 12:29:32</td><td><span class="red"><span class="c">无需核销</span></span></td></tr></tbody></table>

<div class="abs" style="left:260px;top:706px;height:20px;line-height:20px;color:#333;font-size:14px"><span class="c">显示第</span> 1 <span class="c">到第</span> 10 <span class="c">条记录，总共</span> 37 <span class="c">条记录</span> <span class="c">每页显示</span></div>
<div class="btn" style="left:583px;top:701px;width:52px;height:33px"><span class="abs" style="left:13px;top:8px;font-size:13px;color:#333">10</span><svg style="left:31px;top:14px" width="7" height="4" viewBox="0 0 7 4"><path d="M0 4L3.5 0L7 4Z" fill="#333"/></svg></div>
<div class="abs" style="left:639px;top:706px;height:20px;line-height:20px;color:#333;font-size:14px"><span class="c">条记录</span></div>

<div class="pg" style="left:1504px;width:68px;border-radius:3px 0 0 3px"><span class="c">上一页</span></div>
<div class="pg" style="left:1571px;width:34px;background:#444c69;border-color:#444c69;color:#fff">1</div>
<div class="pg" style="left:1605px;width:32px;border-left:none">2</div>
<div class="pg" style="left:1636px;width:34px">3</div>
<div class="pg" style="left:1669px;width:34px">4</div>
<div class="pg" style="left:1702px;width:68px;border-radius:0 3px 3px 0"><span class="c">下一页</span></div>
<div class="abs" style="left:1775px;top:699px;width:50px;height:33px;border:1px solid #d2d6de;background:#fff"></div>
<div class="btn" style="left:1830px;top:700px;width:52px;height:33px;text-align:center;line-height:31px;color:#333"><span class="c">跳转</span></div>

<div class="abs win" style="left:1627px;top:832px;color:#bfc1c3;font-size:20px;line-height:22px;letter-spacing:0.7px"><span class="c">激活</span> Windows</div>
<div class="abs win" style="left:1627px;top:858px;color:#bfc1c3;font-size:14px;line-height:18px;letter-spacing:0.9px"><span class="c">转到“设置”以激活</span> Windows<span class="c">。</span></div>

<div id="wmk"><div class="wm" style="left:170.5px;top:106.6px">FastAdmin<span class="c">应用插件演示</span></div><div class="wm" style="left:520.8px;top:106.6px">FastAdmin<span class="c">应用插件演示</span></div><div class="wm" style="left:871.1px;top:106.6px">FastAdmin<span class="c">应用插件演示</span></div><div class="wm" style="left:1221.4px;top:106.6px">FastAdmin<span class="c">应用插件演示</span></div><div class="wm" style="left:1571.7px;top:106.6px">FastAdmin<span class="c">应用插件演示</span></div><div class="wm" style="left:170.5px;top:244.6px">FastAdmin<span class="c">应用插件演示</span></div><div class="wm" style="left:520.8px;top:244.6px">FastAdmin<span class="c">应用插件演示</span></div><div class="wm" style="left:871.1px;top:244.6px">FastAdmin<span class="c">应用插件演示</span></div><div class="wm" style="left:1221.4px;top:244.6px">FastAdmin<span class="c">应用插件演示</span></div><div class="wm" style="left:1571.7px;top:244.6px">FastAdmin<span class="c">应用插件演示</span></div><div class="wm" style="left:170.5px;top:382.6px">FastAdmin<span class="c">应用插件演示</span></div><div class="wm" style="left:520.8px;top:382.6px">FastAdmin<span class="c">应用插件演示</span></div><div class="wm" style="left:871.1px;top:382.6px">FastAdmin<span class="c">应用插件演示</span></div><div class="wm" style="left:1221.4px;top:382.6px">FastAdmin<span class="c">应用插件演示</span></div><div class="wm" style="left:1571.7px;top:382.6px">FastAdmin<span class="c">应用插件演示</span></div><div class="wm" style="left:170.5px;top:520.6px">FastAdmin<span class="c">应用插件演示</span></div><div class="wm" style="left:520.8px;top:520.6px">FastAdmin<span class="c">应用插件演示</span></div><div class="wm" style="left:871.1px;top:520.6px">FastAdmin<span class="c">应用插件演示</span></div><div class="wm" style="left:1221.4px;top:520.6px">FastAdmin<span class="c">应用插件演示</span></div><div class="wm" style="left:1571.7px;top:520.6px">FastAdmin<span class="c">应用插件演示</span></div><div class="wm" style="left:170.5px;top:658.6px">FastAdmin<span class="c">应用插件演示</span></div><div class="wm" style="left:520.8px;top:658.6px">FastAdmin<span class="c">应用插件演示</span></div><div class="wm" style="left:871.1px;top:658.6px">FastAdmin<span class="c">应用插件演示</span></div><div class="wm" style="left:1221.4px;top:658.6px">FastAdmin<span class="c">应用插件演示</span></div><div class="wm" style="left:1571.7px;top:658.6px">FastAdmin<span class="c">应用插件演示</span></div><div class="wm" style="left:170.5px;top:796.6px">FastAdmin<span class="c">应用插件演示</span></div><div class="wm" style="left:520.8px;top:796.6px">FastAdmin<span class="c">应用插件演示</span></div><div class="wm" style="left:871.1px;top:796.6px">FastAdmin<span class="c">应用插件演示</span></div><div class="wm" style="left:1221.4px;top:796.6px">FastAdmin<span class="c">应用插件演示</span></div><div class="wm" style="left:1571.7px;top:796.6px">FastAdmin<span class="c">应用插件演示</span></div></div>
</div></body></html>
